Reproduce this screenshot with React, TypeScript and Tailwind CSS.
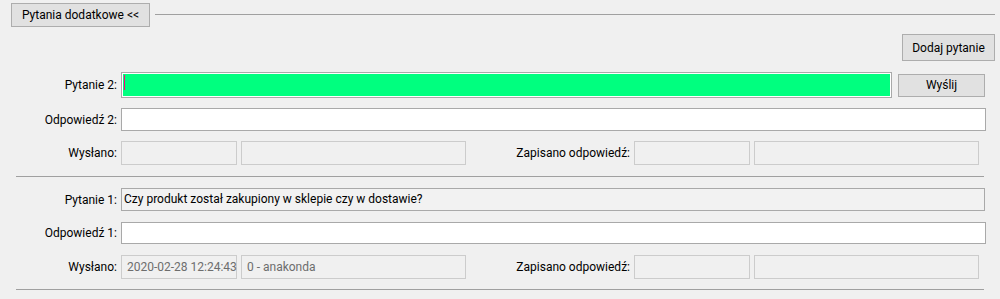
import React from "react";

function Label({ text, w = "w-[121px]" }: { text: string; w?: string }) {
  return (
    <div className={`${w} shrink-0 text-right pr-[4px] text-black whitespace-nowrap`}>
      {text}
    </div>
  );
}

function DisabledBox({ w, value }: { w: string; value?: string }) {
  return (
    <div
      className={`${w} h-[24px] shrink-0 border border-[#cccccc] bg-[#f0f0f0] text-[#6d6d6d] pl-[5px] flex items-center whitespace-nowrap`}
    >
      {value}
    </div>
  );
}

function SentRow({ date, user }: { date?: string; user?: string }) {
  return (
    <div className="flex items-center h-[24px]">
      <Label text="Wysłano:" />
      <DisabledBox w="w-[116px]" value={date} />
      <div className="w-[4px]" />
      <DisabledBox w="w-[225px]" value={user} />
      <Label text="Zapisano odpowiedź:" w="w-[168px]" />
      <DisabledBox w="w-[116px]" />
      <div className="w-[4px]" />
      <DisabledBox w="w-[225px]" />
    </div>
  );
}

function Separator() {
  return <div className="ml-[16px] w-[968px] h-px bg-[#a0a0a0]" />;
}

export default function App() {
  return (
    <div
      className="w-[1000px] h-[299px] bg-[#f0f0f0] text-[12px] leading-none overflow-hidden"
      style={{ fontFamily: 'Roboto, "Noto Sans", sans-serif' }}
    >
      {/* header */}
      <div className="flex pt-[3px] pl-[11px] pr-[5px]">
        <button className="w-[139px] h-[24px] border border-[#adadad] bg-[#e1e1e1] text-black">
          Pytania dodatkowe &lt;&lt;
        </button>
        <div className="flex-1 ml-[5px] mt-[11px] h-px bg-[#a0a0a0]" />
      </div>

      <div className="flex justify-end pr-[5px] mt-[7px]">
        <button className="w-[93px] h-[27px] border border-[#adadad] bg-[#e1e1e1] text-black">
          Dodaj pytanie
        </button>
      </div>

      {/* pytanie 2 */}
      <div className="flex flex-col mt-[11px]">
        <div className="flex items-center h-[26px]">
          <Label text="Pytanie 2:" />
          <div className="relative w-[771px] h-[26px] border border-[#a9a9a9] bg-white p-px">
            <div className="w-full h-full bg-[#00ff7f]" />
            <div className="absolute left-[2px] top-[2px] w-px h-[15px] bg-[#ff0080]" />
          </div>
          <button className="ml-[6px] w-[87px] h-[23px] border border-[#adadad] bg-[#e1e1e1] text-black">
            Wyślij
          </button>
        </div>
        <div className="flex items-center h-[23px] mt-[10px]">
          <Label text="Odpowiedź 2:" />
          <div className="w-[865px] h-[23px] border border-[#a9a9a9] bg-white" />
        </div>
        <div className="mt-[10px]">
          <SentRow />
        </div>
        <div className="mt-[11px]">
          <Separator />
        </div>
      </div>

      {/* pytanie 1 */}
      <div className="flex flex-col mt-[11px]">
        <div className="flex items-center h-[23px]">
          <Label text="Pytanie 1:" />
          <div className="w-[864px] h-[23px] border border-[#a9a9a9] bg-[#f2f2f2] pl-[2px] pb-[2px] flex items-center text-black whitespace-nowrap">
            Czy produkt został zakupiony w sklepie czy w dostawie?
          </div>
        </div>
        <div className="flex items-center h-[22px] mt-[11px]">
          <Label text="Odpowiedź 1:" />
          <div className="w-[865px] h-[22px] border border-[#a9a9a9] bg-white" />
        </div>
        <div className="mt-[11px]">
          <SentRow date="2020-02-28 12:24:43" user="0 - anakonda" />
        </div>
        <div className="mt-[10px]">
          <Separator />
        </div>
      </div>
    </div>
  );
}
